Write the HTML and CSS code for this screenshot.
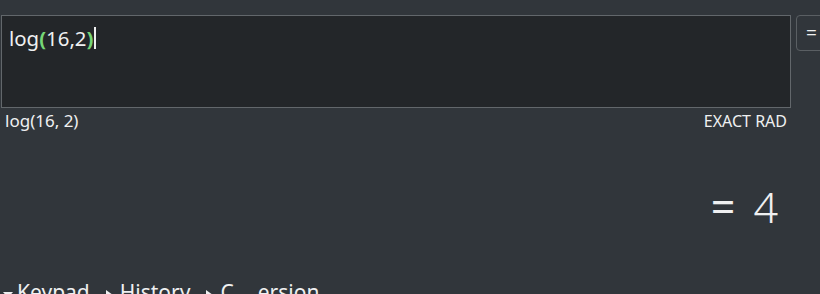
FILE: index.html
```
<!DOCTYPE html>
<html>
<head>
<meta charset="utf-8">
<link rel="stylesheet" href="styles.css">
</head>
<body>
<div class="top">
  <div class="entry"><span>log</span><span class="paren">(</span><span>16,2</span><span class="paren">)</span><span class="cursor"></span></div>
  <div class="eqbtn">=</div>
</div>
<div class="status">
  <span>log(16, 2)</span>
  <span class="mode">EXACT RAD</span>
</div>
<div class="result"><span class="eq">=</span><span>4</span></div>
<div class="expanders">
  <span class="exp"><span class="arrow down"></span>Keypad</span>
  <span class="exp"><span class="arrow right"></span>History</span>
  <span class="exp"><span class="arrow right"></span>C<span class="hole">onv</span>ersion</span>
</div>
</body>
</html>
```
FILE: styles.css
```
html, body { margin: 0; padding: 0; }
body {
  width: 820px; height: 294px; overflow: hidden;
  background: #31363b; color: #eff0f1;
  font-family: "Noto Sans", sans-serif;
}
.top { display: flex; gap: 5px; padding: 15px 0 0 1px; }
.entry {
  flex: none; width: 781px; height: 83px; padding: 8px 0 0 7px;
  border: 1px solid #62676b; background: #232629;
  font-size: 20.4px; line-height: 28px;
  display: flex; align-items: flex-start;
}
.paren { color: #76d676; font-weight: 700; }
.cursor { display: inline-block; width: 2px; height: 22px; background: #eff0f1; margin: 3px 0 0 1px; }
.eqbtn {
  flex: none; width: 40px; height: 34px; border: 1px solid #5a5f63; border-radius: 4px;
  background: #31363b; font-size: 19px; line-height: 34px; padding-left: 9px;
}
.status {
  display: flex; justify-content: space-between; align-items: baseline; padding: 2px 33px 0 5px;
  font-size: 17px; line-height: 22px;
}
.mode { font-size: 16px; }
.result {
  display: flex; justify-content: flex-end; align-items: baseline;
  padding-right: 42px; margin-top: 50px;
  font-size: 43px; font-weight: 300; line-height: 50px;
}
.eq { font-weight: 400; margin-right: 18px; }
.expanders { display: flex; align-items: flex-start; padding: 48px 0 0 3px; font-size: 21px; line-height: 24px; }
.exp { display: inline-flex; align-items: center; margin-right: 15px; }
.arrow { display: inline-block; width: 0; height: 0; margin-right: 4px; }
.arrow.down { border-left: 5px solid transparent; border-right: 5px solid transparent; border-top: 6px solid #eff0f1; margin-top: 6px; }
.arrow.right { border-top: 5px solid transparent; border-bottom: 5px solid transparent; border-left: 7px solid #eff0f1; margin-left: 1px; margin-right: 7px; margin-top: 6px; }
.hole { display: inline-block; width: 24px; overflow: hidden; color: transparent; white-space: nowrap; vertical-align: top; }
```
